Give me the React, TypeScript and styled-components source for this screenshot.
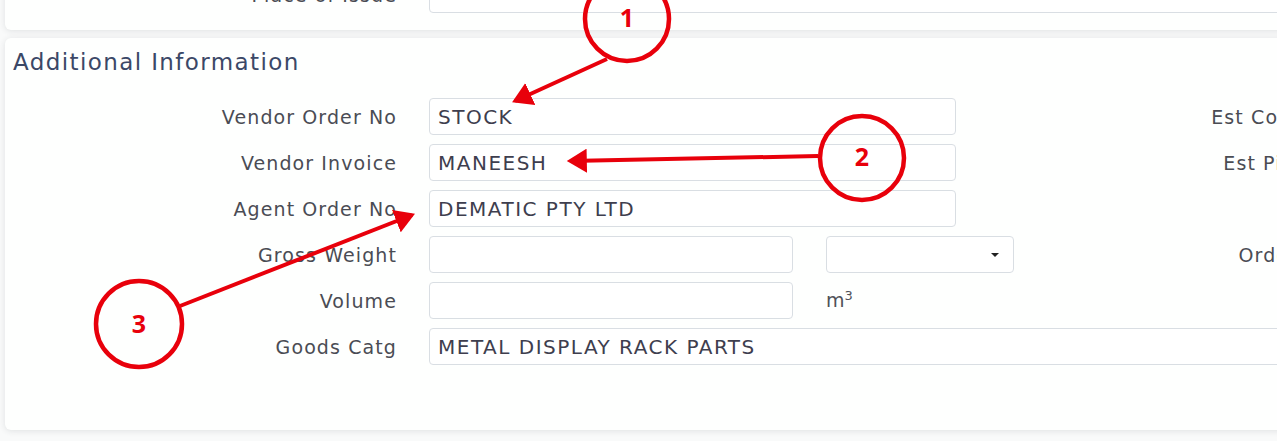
import React from "react";
import styled, { createGlobalStyle } from "styled-components";

const FONT = `"DejaVu Sans", Lato, sans-serif`;

const Global = createGlobalStyle`
  html, body { margin: 0; padding: 0; }
  body {
    background: #f9fafa;
    overflow: hidden;
    width: 1277px;
    height: 441px;
    font-family: ${FONT};
  }
`;

const Page = styled.div`
  position: relative;
  width: 1277px;
  height: 441px;
  overflow: hidden;
`;

const Stack = styled.div`
  margin-top: -36px;
  padding-left: 5px;
  width: 1500px;
  display: flex;
  flex-direction: column;
  gap: 8px;
`;

const Card = styled.section<{ $padTop: number; $padBottom: number }>`
  background: #fefffe;
  border-radius: 6px;
  box-shadow: 0 1px 6px rgba(40, 50, 60, 0.12);
  padding: ${(p) => p.$padTop}px 0 ${(p) => p.$padBottom}px 8px;
  display: flex;
  flex-direction: column;
  gap: 9px;
`;

const Title = styled.h3`
  margin: 0 0 14px;
  font-family: ${FONT};
  font-weight: 400;
  font-size: 23px;
  line-height: 26px;
  letter-spacing: 1.4px;
  color: #3b4867;
`;

const Row = styled.div`
  display: flex;
  align-items: center;
  height: 37px;
`;

const Label = styled.label`
  width: 384px;
  flex: none;
  text-align: right;
  font-size: 19px;
  letter-spacing: 1.1px;
  color: #4a4c54;
  margin-right: 32px;
  white-space: nowrap;
`;

const Fields = styled.div<{ $width: number }>`
  width: ${(p) => p.$width}px;
  flex: none;
  display: flex;
  align-items: center;
  gap: 33px;
`;

const Input = styled.div<{ $width?: number }>`
  box-sizing: border-box;
  height: 37px;
  width: ${(p) => (p.$width ? `${p.$width}px` : "100%")};
  flex: none;
  border: 1px solid #d9dee3;
  border-radius: 4px;
  background: #fff;
  padding: 0 8px;
  display: flex;
  align-items: center;
  font-size: 20px;
  color: #3e3e4e;
  letter-spacing: 1.5px;
  white-space: nowrap;
`;

const Select = styled(Input)`
  justify-content: flex-end;
  padding-right: 14px;
`;

const Caret = styled.span`
  width: 0;
  height: 0;
  border-left: 4px solid transparent;
  border-right: 4px solid transparent;
  border-top: 4px solid #222;
`;

const Unit = styled.span`
  font-size: 19px;
  color: #505158;
  margin-top: -2px;
  sup {
    font-size: 13px;
  }
`;

const SideLabel = styled(Label)<{ $width: number }>`
  width: ${(p) => p.$width}px;
  margin-right: 0;
`;

const Overlay = styled.svg`
  position: absolute;
  left: 0;
  top: 0;
  pointer-events: none;
`;

const Num = styled.text`
  font-family: "Open Sans", "Liberation Sans", sans-serif;
  font-weight: 700;
  font-size: 25px;
  fill: #e8000b;
`;

export default function App() {
  const red = "#e8000b";
  return (
    <Page>
      <Global />
      <Stack>
        <Card $padTop={12} $padBottom={17}>
          <Row>
            <Label>Place of Issue</Label>
            <Fields $width={1000}>
              <Input />
            </Fields>
          </Row>
        </Card>
        <Card $padTop={11} $padBottom={65}>
          <Title>Additional Information</Title>
          <Row>
            <Label>Vendor Order No</Label>
            <Fields $width={527}>
              <Input>STOCK</Input>
            </Fields>
            <SideLabel $width={400}>Est Collection</SideLabel>
          </Row>
          <Row>
            <Label>Vendor Invoice</Label>
            <Fields $width={527}>
              <Input>MANEESH</Input>
            </Fields>
            <SideLabel $width={375}>Est Pickup</SideLabel>
          </Row>
          <Row>
            <Label>Agent Order No</Label>
            <Fields $width={527}>
              <Input>DEMATIC PTY LTD</Input>
            </Fields>
          </Row>
          <Row>
            <Label>Gross Weight</Label>
            <Fields $width={584}>
              <Input $width={364} />
              <Select $width={188}>
                <Caret />
              </Select>
            </Fields>
            <SideLabel $width={342}>Order Date</SideLabel>
          </Row>
          <Row>
            <Label>Volume</Label>
            <Fields $width={527}>
              <Input $width={364} />
              <Unit>
                m<sup>3</sup>
              </Unit>
            </Fields>
          </Row>
          <Row>
            <Label>Goods Catg</Label>
            <Fields $width={1000}>
              <Input>METAL DISPLAY RACK PARTS</Input>
            </Fields>
          </Row>
        </Card>
      </Stack>
      <Overlay width="1277" height="441" viewBox="0 0 1277 441">
        <defs>
          <marker id="ah" markerWidth="6" markerHeight="6" refX="4.2" refY="3" orient="auto" markerUnits="strokeWidth">
            <path d="M0,0 L5,3 L0,6 Z" fill={red} />
          </marker>
        </defs>
        <circle cx="627" cy="19" r="42" fill="none" stroke={red} strokeWidth="4.5" />
        <Num x="627" y="27" textAnchor="middle">1</Num>
        <line x1="607" y1="59" x2="515" y2="101" stroke={red} strokeWidth="4" markerEnd="url(#ah)" />

        <circle cx="862" cy="158" r="42" fill="none" stroke={red} strokeWidth="4.5" />
        <Num x="862" y="166" textAnchor="middle">2</Num>
        <line x1="818" y1="156" x2="570" y2="161" stroke={red} strokeWidth="4" markerEnd="url(#ah)" />

        <circle cx="139" cy="324" r="43" fill="none" stroke={red} strokeWidth="4.5" />
        <Num x="139" y="333" textAnchor="middle">3</Num>
        <line x1="180" y1="306" x2="412" y2="215" stroke={red} strokeWidth="4" markerEnd="url(#ah)" />
      </Overlay>
    </Page>
  );
}
